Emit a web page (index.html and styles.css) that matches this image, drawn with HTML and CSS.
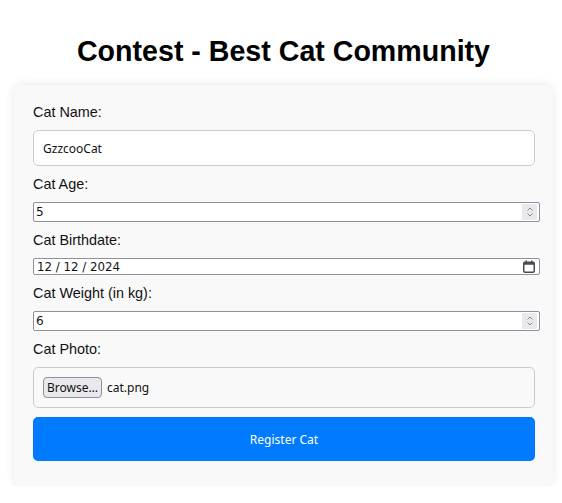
FILE: index.html
```html
<!DOCTYPE html>
<html lang="en">
<head>
<meta charset="utf-8">
<title>Contest - Best Cat Community</title>
<link rel="stylesheet" href="styles.css">
</head>
<body>
<h1 class="title">Contest - Best Cat Community</h1>
<form class="card">
  <label class="label" for="name">Cat Name:</label>
  <input class="text-input" id="name" type="text" value="GzzcooCat">

  <label class="label" for="age">Cat Age:</label>
  <div class="field">
    <input class="plain-input" id="age" type="text" value="5">
    <span class="spinner">
      <svg width="8" height="12" viewBox="0 0 8 12"><path d="M1.5 4.5 L4 2 L6.5 4.5 M1.5 7.5 L4 10 L6.5 7.5" fill="none" stroke="#8a8a90" stroke-width="1"/></svg>
    </span>
  </div>

  <label class="label" for="birth">Cat Birthdate:</label>
  <div class="field">
    <input class="plain-input date-input" id="birth" type="text" value="12 / 12 / 2024">
    <span class="calendar">
      <svg width="12" height="13" viewBox="0 0 12 13"><rect x="0.75" y="2.25" width="10.5" height="10" rx="1.2" fill="none" stroke="#4a4a4f" stroke-width="1.5"/><rect x="0.75" y="2.25" width="10.5" height="2.5" fill="#4a4a4f"/><rect x="2.5" y="0.5" width="1.5" height="2.5" fill="#4a4a4f"/><rect x="8" y="0.5" width="1.5" height="2.5" fill="#4a4a4f"/></svg>
    </span>
  </div>

  <label class="label" for="weight">Cat Weight (in kg):</label>
  <div class="field">
    <input class="plain-input" id="weight" type="text" value="6">
    <span class="spinner">
      <svg width="8" height="12" viewBox="0 0 8 12"><path d="M1.5 4.5 L4 2 L6.5 4.5 M1.5 7.5 L4 10 L6.5 7.5" fill="none" stroke="#8a8a90" stroke-width="1"/></svg>
    </span>
  </div>

  <label class="label">Cat Photo:</label>
  <div class="file-box">
    <button class="browse" type="button">Browse…</button>
    <span class="file-name">cat.png</span>
  </div>

  <button class="submit" type="button">Register Cat</button>
</form>
</body>
</html>
```

FILE: styles.css
```css
html, body {
  margin: 0;
  padding: 0;
  background: #ffffff;
}

body {
  font-family: "Liberation Sans", Arial, sans-serif;
  color: #000;
}

.title {
  width: 539px;
  margin: 35px 0 18px 14px;
  font-size: 28.6px;
  font-weight: bold;
  line-height: 32px;
  text-align: center;
}

.card {
  box-sizing: border-box;
  width: 539px;
  margin: 0 0 0 14px;
  padding: 18px 19px 25px;
  background: #f9f9f9;
  border-radius: 8px;
  box-shadow: 0 0 10px rgba(0, 0, 0, 0.1);
  display: flex;
  flex-direction: column;
  gap: 9px;
}

.label {
  display: block;
  font-size: 14.4px;
  line-height: 18px;
  color: #111;
}

.text-input {
  box-sizing: border-box;
  width: 502px;
  height: 36px;
  margin: 0;
  padding: 0 9px;
  border: 1px solid #cccccc;
  border-radius: 5px;
  background: #fff;
  font-family: "Noto Sans", "Open Sans", sans-serif;
  font-size: 12px;
  color: #111;
  outline: none;
}

.field {
  position: relative;
  width: 507px;
}

.plain-input {
  box-sizing: border-box;
  display: block;
  width: 507px;
  height: 20px;
  margin: 0;
  padding: 0 2px;
  border: 1px solid #8f8f9d;
  border-radius: 2px;
  background: #fff;
  font-family: "DejaVu Sans", sans-serif;
  font-size: 12px;
  color: #111;
  outline: none;
}

.date-input {
  height: 17px;
  padding-left: 3px;
  font-size: 11.8px;
}

.spinner {
  position: absolute;
  top: 2px;
  right: 3px;
  width: 15px;
  height: 16px;
  background: #e9e9ed;
  border-radius: 1px;
  display: flex;
  align-items: center;
  justify-content: center;
}

.calendar {
  position: absolute;
  top: 2px;
  right: 5px;
  height: 13px;
  display: flex;
}

.file-box {
  box-sizing: border-box;
  width: 502px;
  height: 41px;
  padding: 0 9px;
  border: 1px solid #cccccc;
  border-radius: 5px;
  background: #f9f9f9;
  display: flex;
  align-items: center;
  gap: 5px;
}

.browse {
  box-sizing: border-box;
  height: 21px;
  margin: 0;
  padding: 0 3px;
  border: 1px solid #8f8f9d;
  border-radius: 4px;
  background: #e9e9ed;
  font-family: "Noto Sans", "Open Sans", sans-serif;
  font-size: 12px;
  line-height: 19px;
  color: #111;
}

.file-name {
  font-family: "Noto Sans", "Open Sans", sans-serif;
  font-size: 12px;
  color: #111;
}

.submit {
  width: 502px;
  height: 44px;
  margin: 0;
  border: none;
  border-radius: 5px;
  background: #007bff;
  color: #fff;
  font-family: "Noto Sans", "Open Sans", sans-serif;
  font-size: 12px;
}
```
